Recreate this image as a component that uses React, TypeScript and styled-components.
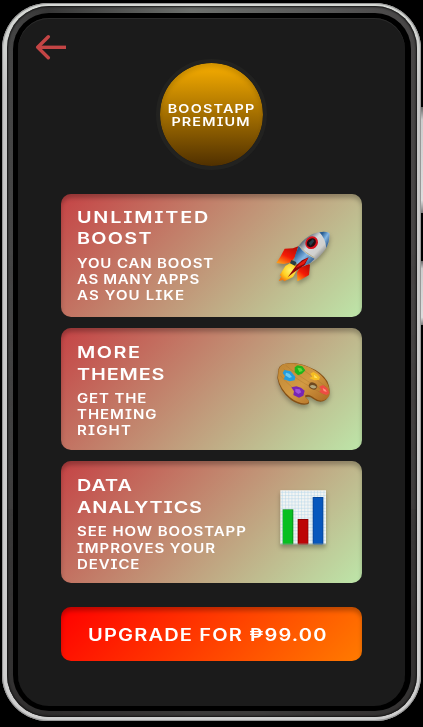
import React from "react";
import styled, { createGlobalStyle } from "styled-components";

const GlobalStyle = createGlobalStyle`
  * { box-sizing: border-box; }
  html, body { margin: 0; background: #000; }
  body { font-family: Inter, "Noto Sans", sans-serif; overflow: hidden; }
`;

const Stage = styled.div`
  display: flex;
  width: 423px;
  height: 727px;
  padding: 3px 0 6px 2px;
  background: #000;
`;

const Shell = styled.div`
  width: 419px;
  height: 718px;
  padding: 3px 4px 4px 5px;
  border-radius: 46px;
  background: linear-gradient(#d9dcd8, #c6c6c6 12%, #cfcfcf);
  box-shadow: inset 0 0 2px #777, inset 0 0 0 1px #a5a5a5;
`;

const Rim = styled.div`
  height: 100%;
  padding: 7px 6px 6px 6px;
  border-radius: 42px;
  background: linear-gradient(90deg, #474747, #363636 10%, #6c6f6c 45%, #555 80%, #474545);
  box-shadow: inset 0 0 2px 1px #111, inset 0 -500px 300px -300px #2c2a2a;
`;

const Bezel = styled.div`
  height: 100%;
  padding: 5px;
  border-radius: 36px;
  background: #000;
`;

const Screen = styled.main`
  display: flex;
  flex-direction: column;
  align-items: center;
  width: 387px;
  height: 688px;
  border-radius: 31px;
  background: #1b1b1b;
  box-shadow: inset 0 1px 0 #2b2b2b;
`;

const SideKeys = styled.div`
  display: flex;
  flex-direction: column;
  gap: 48px;
  padding-top: 104px;
`;

const SideKey = styled.div<{ $height: number }>`
  width: 2px;
  height: ${(p) => p.$height}px;
  background: linear-gradient(#666, #ccc 12%, #ddd 88%, #777);
`;

const Header = styled.header`
  align-self: stretch;
  height: 41px;
  padding: 16px 0 0 17px;
`;

const BackButton = styled.button`
  display: block;
  padding: 0;
  border: 0;
  background: none;
  color: #c44545;
`;

const Badge = styled.div`
  display: flex;
  flex-direction: column;
  align-items: center;
  justify-content: center;
  width: 111px;
  height: 111px;
  border: 4px solid #222220;
  border-radius: 50%;
  background: linear-gradient(#f8ae00, #503000) padding-box;
  box-shadow: inset 0 4px 4px rgba(0, 0, 0, 0.15);
`;

const Line = styled.span<{ $track?: number; $center?: boolean }>`
  display: block;
  white-space: nowrap;
  color: #fff;
  font-weight: 600;
  font-feature-settings: "cv08" 1;
  letter-spacing: ${(p) => p.$track ?? 1}px;
  transform: scaleX(1.2);
  transform-origin: ${(p) => (p.$center ? "center" : "left")};
`;

const BadgeLine = styled(Line)`
  font-size: 12px;
  line-height: 13px;
`;

const Features = styled.section`
  display: flex;
  flex-direction: column;
  gap: 10.8px;
  margin-top: 24.4px;
`;

const Card = styled.article<{ $top: number }>`
  display: flex;
  justify-content: space-between;
  width: 300.5px;
  height: 122.5px;
  padding: ${(p) => p.$top}px 17px 0 16px;
  border-radius: 10px;
  background: linear-gradient(135deg, #c54345, #bde6a9);
  box-shadow: inset 0 4px 4px rgba(0, 0, 0, 0.25);
`;

const Title = styled.h2`
  margin: 0 0 6px;
`;

const TitleLine = styled(Line)`
  font-size: 16.5px;
  line-height: 21.5px;
`;

const Description = styled.p`
  margin: 0;
`;

const DescriptionLine = styled(Line)`
  font-size: 12.5px;
  line-height: 16.1px;
`;

const Art = styled.svg<{ $drop: number }>`
  flex: none;
  width: 80px;
  height: 80px;
  margin-top: ${(p) => p.$drop}px;
  filter: drop-shadow(0 3px 2px rgba(0, 0, 0, 0.28));
`;

const Upgrade = styled.button`
  display: flex;
  align-items: center;
  width: 300.5px;
  height: 53.5px;
  margin-top: 23.7px;
  padding: 1.5px 0 0 27px;
  border: 0;
  border-radius: 10px;
  font-family: inherit;
  background: linear-gradient(135deg, #ff0000, #ff7b00);
  box-shadow: inset 0 4px 4px rgba(0, 0, 0, 0.25);
`;

const UpgradeLine = styled(Line)`
  font-size: 16.7px;
  line-height: 22px;
`;

function Rocket() {
  return (
    <Art viewBox="0 0 240 240" $drop={13}>
      <defs>
        <linearGradient id="hull" x1="0" y1="0" x2="1" y2="1">
          <stop offset=".22" stopColor="#4c5a68" />
          <stop offset=".4" stopColor="#d5d7da" />
          <stop offset=".6" stopColor="#d0d0ce" />
          <stop offset=".8" stopColor="#656666" />
        </linearGradient>
        <linearGradient id="blue" x1="0" y1="0" x2="1" y2="1">
          <stop offset=".2" stopColor="#285d94" />
          <stop offset=".5" stopColor="#84b7e4" />
          <stop offset=".9" stopColor="#214b7c" />
        </linearGradient>
        <linearGradient id="fin" x1=".8" y1="0" x2=".2" y2="1">
          <stop offset="0" stopColor="#b60b05" />
          <stop offset=".55" stopColor="#f51b06" />
          <stop offset="1" stopColor="#ff9c18" />
        </linearGradient>
        <radialGradient id="flame" cx=".6" cy=".4" r=".65">
          <stop offset="0" stopColor="#fff36b" />
          <stop offset=".6" stopColor="#ffce20" />
          <stop offset="1" stopColor="#f17710" />
        </radialGradient>
      </defs>
      <path d="M100 79 84 85 59 86 47 109 34 129 57 132 78 127 90 110Z" fill="url(#fin)" />
      <path d="M109 138 96 157 97 184 106 180 132 165 135 134 126 132Z" fill="url(#fin)" />
      <path d="M76 129 61 138 44 166 49 169 41 183 54 180 58 184 72 177 84 171 98 147 91 130Z" fill="url(#flame)" />
      <path d="M100 79Q118 54 143 42Q170 32 193 39Q196 70 178 92Q160 116 136 130L109 141 89 123Z" fill="url(#hull)" />
      <path d="M163 37Q180 33 193 39Q196 60 184 84Q181 54 163 37Z" fill="url(#blue)" />
      <path d="M101 78Q116 100 149 116L135 130 108 142 88 123 90 107Z" fill="url(#blue)" />
      <path d="M103 78Q119 98 149 114" fill="none" stroke="#b6ae8b" strokeWidth="3" />
      <ellipse cx="140" cy="68" rx="20" ry="18" fill="#d7101c" transform="rotate(-42 140 68)" />
      <ellipse cx="139" cy="68" rx="15" ry="12" fill="#210d12" transform="rotate(-42 139 68)" />
      <path d="M131 69 143 58 148 63 137 77Z" fill="#263d47" />
      <path d="M79 120 94 126 91 138 75 130Z" fill="#273d46" />
      <path d="M131 112 111 121 94 136 68 172 85 158 119 135Z" fill="#8f0507" />
      <path d="M130 113 106 128 91 145 117 132Z" fill="#e51a10" />
    </Art>
  );
}

function Palette() {
  return (
    <Art viewBox="0 0 240 240" $drop={2.8}>
      <defs>
        <linearGradient id="wood" x1="0" y1="0" x2="1" y2="1">
          <stop stopColor="#be8634" />
          <stop offset=".5" stopColor="#d39a43" />
          <stop offset="1" stopColor="#a9651e" />
        </linearGradient>
      </defs>
      <path d="M39 84Q38 60 60 56Q91 49 130 65Q170 80 187 109Q202 141 183 164Q165 177 145 162Q132 151 122 157Q139 173 128 178Q107 184 78 165Q43 137 37 99Z" fill="#855015" />
      <path d="M40 84Q40 60 61 56Q93 50 132 67Q174 87 189 120Q202 150 185 161Q168 174 149 160Q131 145 121 151Q118 156 127 162Q137 171 125 175Q101 178 75 157Q45 131 39 99Z" fill="url(#wood)" />
      <g fill="none" stroke="#9e6828" strokeWidth="1.5" opacity=".6">
        <path d="M46 91Q79 132 119 149M62 61Q107 98 175 137M56 72Q104 111 183 151M88 57Q129 83 186 128" />
      </g>
      <ellipse cx="144" cy="123" rx="13" ry="10" fill="#6e491f" transform="rotate(25 144 123)" />
      <path d="M134 124Q143 115 155 126Q145 136 134 124" fill="#b2a77e" />
      <path d="M53 84 58 75 77 79 91 95 89 106 74 109 56 103 60 94Z" fill="#259cdc" />
      <path d="m63 83 10 3 8 10-8 3-12-8Z" fill="#6bc9ef" />
      <path d="M89 67 98 61 112 64 121 76 111 86 99 91 89 81Z" fill="#20b31b" />
      <path d="m97 68 12 2 4 8-10 3Z" fill="#61da3a" />
      <path d="M136 86 145 81 157 88 165 97 162 105 148 106 133 99 142 95Z" fill="#f5bd23" />
      <path d="m147 89 8 6 3 5-10-2Z" fill="#ffe260" />
      <path d="M162 125 174 120 187 130 193 144 185 150 173 146 163 140 169 133Z" fill="#ed4d43" />
      <path d="m173 129 9 5 3 7-9-3Z" fill="#ff9280" />
      <path d="M79 127 94 124 108 128 119 137 115 152 102 158 85 150 87 139Z" fill="#7725b4" />
      <path d="m91 131 13 2 5 9-9 5-9-7Z" fill="#9f51d8" />
    </Art>
  );
}

function Chart() {
  const steps = Array.from({ length: 17 }, (_, i) => i);
  return (
    <Art viewBox="0 0 240 240" $drop={2.8}>
      <path d="M46 37H183V199H46Z" fill="#f3f5f3" />
      <g stroke="#9cc9e6" strokeWidth="1.4" opacity=".75">
        {steps.map((i) => (
          <path key={i} d={`M46 ${43 + i * 9.6}H182${i < 14 ? `M${52 + i * 9.6} 38V198` : ""}`} />
        ))}
      </g>
      <path d="M53 94H85V199H53Z" fill="#078f1a" />
      <path d="M54 96H82V199H54Z" fill="#07bf21" />
      <path d="M98 123H130V199H98Z" fill="#8e0000" />
      <path d="M101 126H128V199H101Z" fill="#bd0507" />
      <path d="M143 57H175V199H143Z" fill="#06489e" />
      <path d="M146 60H172V199H146Z" fill="#0757bd" />
      <path d="M46 198H183" stroke="#88988a" strokeWidth="2" />
    </Art>
  );
}

type Copy = [text: string, tracking: number];
type Feature = { top: number; title: Copy[]; text: Copy[]; art: React.ReactNode };

const features: Feature[] = [
  {
    top: 12.4,
    title: [["UNLIMITED", 1.5], ["BOOST", 1.05]],
    text: [["YOU CAN BOOST", 0.72], ["AS MANY APPS", 0.55], ["AS YOU LIKE", 0.94]],
    art: <Rocket />,
  },
  {
    top: 14.5,
    title: [["MORE", 1.25], ["THEMES", 0.75]],
    text: [["GET THE", 0.73], ["THEMING", 0.82], ["RIGHT", 1]],
    art: <Palette />,
  },
  {
    top: 14.5,
    title: [["DATA", 0.8], ["ANALYTICS", 0.75]],
    text: [["SEE HOW BOOSTAPP", 0.78], ["IMPROVES YOUR", 0.75], ["DEVICE", 0.75]],
    art: <Chart />,
  },
];

export default function App() {
  return (
    <>
      <GlobalStyle />
      <Stage>
        <Shell>
          <Rim>
            <Bezel>
              <Screen>
                <Header>
                  <BackButton aria-label="Back">
                    <svg width="32" height="26" viewBox="0 0 32 26" fill="none" stroke="currentColor" strokeWidth="3.4" strokeLinejoin="round">
                      <path d="M2.5 13.3H31" />
                      <path d="M13.3 2.7 2.7 13.3 13.3 23.7" strokeLinecap="round" />
                    </svg>
                  </BackButton>
                </Header>
                <Badge>
                  <BadgeLine $center $track={1}>BOOSTAPP</BadgeLine>
                  <BadgeLine $center $track={0.95}>PREMIUM</BadgeLine>
                </Badge>
                <Features>
                  {features.map((f) => (
                    <Card key={f.title[0][0]} $top={f.top}>
                      <div>
                        <Title>
                          {f.title.map(([t, k]) => <TitleLine key={t} $track={k}>{t}</TitleLine>)}
                        </Title>
                        <Description>
                          {f.text.map(([t, k]) => <DescriptionLine key={t} $track={k}>{t}</DescriptionLine>)}
                        </Description>
                      </div>
                      {f.art}
                    </Card>
                  ))}
                </Features>
                <Upgrade>
                  <UpgradeLine $track={0.98}>UPGRADE FOR ₱99.00</UpgradeLine>
                </Upgrade>
              </Screen>
            </Bezel>
          </Rim>
        </Shell>
        <SideKeys>
          <SideKey $height={106} />
          <SideKey $height={64} />
        </SideKeys>
      </Stage>
    </>
  );
}
